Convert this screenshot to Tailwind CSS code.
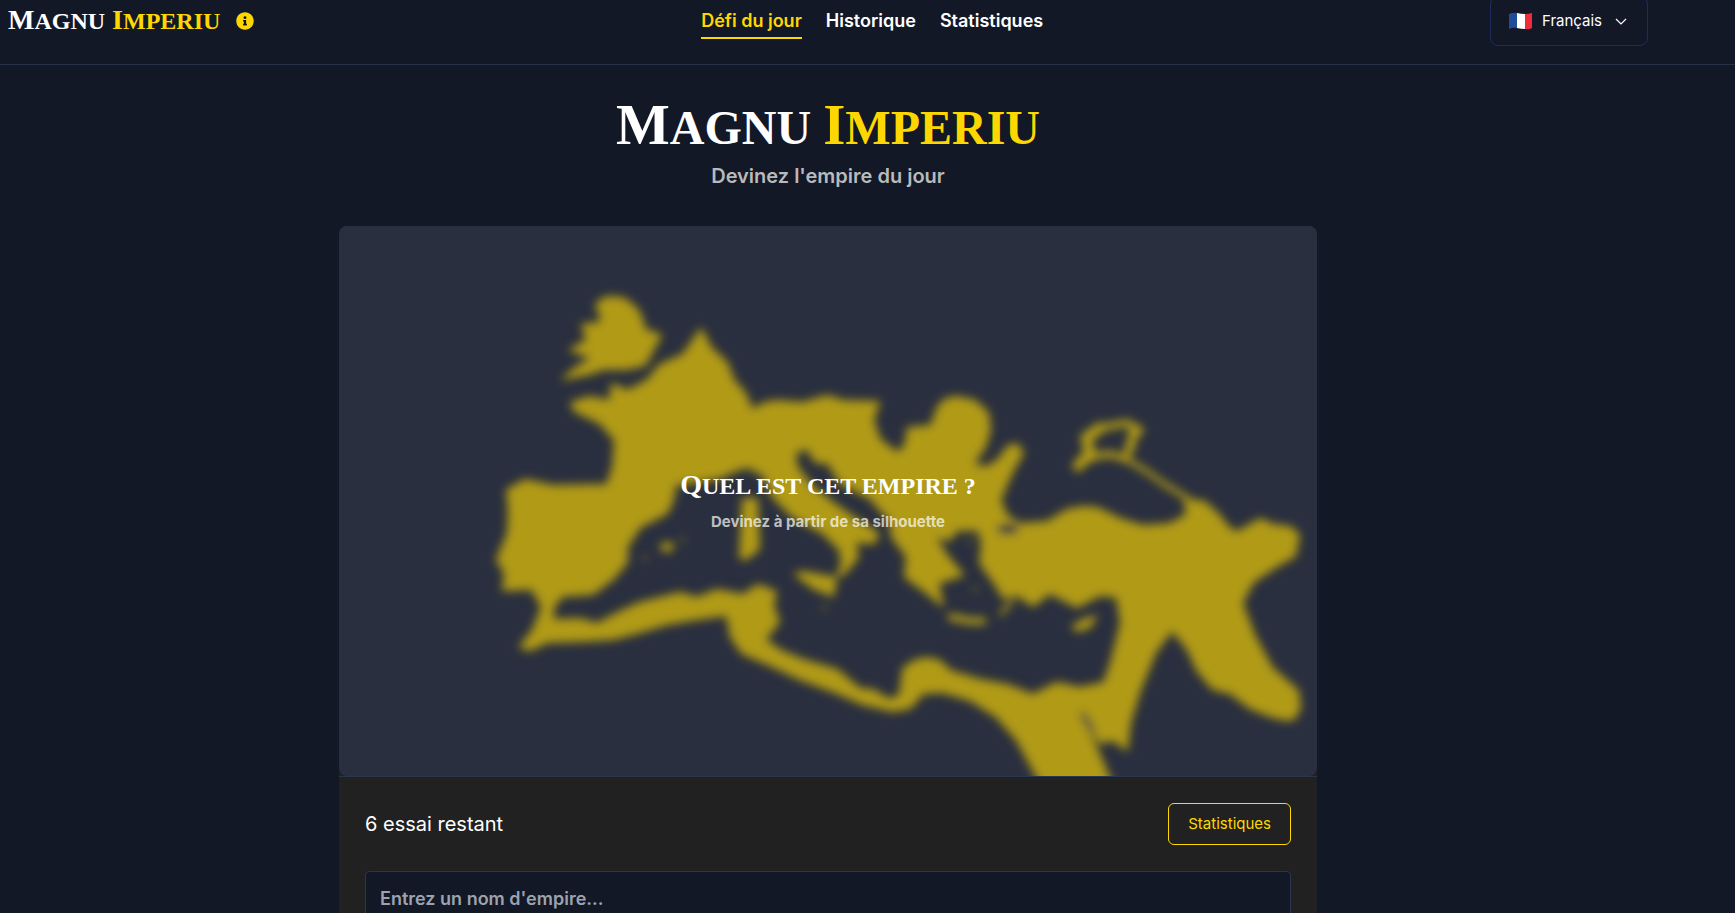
<!DOCTYPE html>
<html lang="fr">
<head>
  <meta charset="UTF-8" />
  <meta name="viewport" content="width=device-width, initial-scale=1.0" />
  <title>Magnu Imperiu</title>
  <script src="https://cdn.jsdelivr.net/npm/@tailwindcss/browser@4"></script>
</head>
<body class="bg-[#121826] font-['Inter',sans-serif] text-white overflow-x-hidden h-screen overflow-y-hidden">
  <header class="h-[88px] -mt-[23px] pl-2 pr-[87px] flex items-center justify-between border-b border-[#263147]">
    <div class="flex items-center gap-4">
      <a href="#" class="font-['Liberation_Serif',serif] font-bold uppercase text-[28px] leading-8 whitespace-nowrap">M<span class="text-2xl">agnu</span> <span class="text-[#ffd700]">I<span class="text-2xl">mperiu</span></span></a>
      <button type="button" aria-label="Informations">
        <svg class="block size-[18px]" viewBox="0 0 512 512" fill="#ffd700"><path d="M256 8C119 8 8 119 8 256s111 248 248 248 248-111 248-248S393 8 256 8zm0 110a42 42 0 1 1 0 84 42 42 0 0 1 0-84zm56 254c0 7-5 12-12 12h-88c-7 0-12-5-12-12v-24c0-7 5-12 12-12h12v-64h-12c-7 0-12-5-12-12v-24c0-7 5-12 12-12h64c7 0 12 5 12 12v100h12c7 0 12 5 12 12v24z"/></svg>
      </button>
    </div>

    <nav class="flex items-center gap-6 text-lg leading-6 font-semibold">
      <a href="#" class="relative text-[#ffd700]">Défi du jour<span class="absolute inset-x-0 -bottom-[6px] h-[2px] bg-[#ffd700]"></span></a>
      <a href="#">Historique</a>
      <a href="#">Statistiques</a>
    </nav>

    <label class="h-[50px] px-[18px] flex items-center rounded-lg border border-[#1e2c5f]">
      <svg class="w-6 h-[18px] mr-[9px]" viewBox="0 0 24 18">
        <path fill="#1f4b99" d="M0 2Q4 0 8 1V16Q4 15 0 17Z"/>
        <path fill="#fff" d="M8 1Q12 2 16 2V17Q12 17 8 16Z"/>
        <path fill="#ed2d39" d="M16 2Q20 2 23 1V16Q20 18 16 17Z"/>
      </svg>
      <select aria-label="Langue" class="appearance-none bg-transparent text-[15px] leading-6 outline-none">
        <option>Français</option>
      </select>
      <svg class="size-4 ml-[10px]" viewBox="0 0 16 16" fill="none" stroke="#fff" stroke-width="1.2"><path d="M3 6L8 11 13 6"/></svg>
    </label>
  </header>

  <main class="pr-[79px]">
    <div class="max-w-[978px] mx-auto">
      <div class="pt-7 pb-9 text-center">
        <h1 class="font-['Liberation_Serif',serif] font-bold uppercase text-[57px] leading-[64px]">M<span class="text-5xl">agnu </span><span class="text-[#ffd700]">I<span class="text-5xl">mperiu</span></span></h1>
        <p class="mt-[5px] text-xl leading-7 font-semibold text-[#b8babd]">Devinez l'empire du jour</p>
      </div>

      <section class="bg-[#212121] rounded-lg">
        <div class="relative rounded-lg overflow-hidden bg-[#2a2f3f]">
          <svg class="block w-full" viewBox="339 226 978 550">
            <defs>
              <filter id="haze" x="-5%" y="-5%" width="110%" height="110%"><feGaussianBlur stdDeviation="5"/></filter>
            </defs>
            <g filter="url(#haze)" fill="#b09a12" stroke="#b09a12" stroke-width="2" stroke-linejoin="round" stroke-linecap="round">
              <!-- Britannia -->
              <path d="M596 305L604 298 613 297 625 299 637 309 642 319 645 330 661 335 653 350 645 365 627 369 603 369 589 374 563 379 577 367 592 358 570 350 587 340 582 325 598 323 602 319Z"/>
              <!-- continent, the sea cut out of it -->
              <path fill-rule="evenodd" d="M571 403L590 397 610 401 612 384 627 391 647 381 660 365 683 355 701 329 711 348 727 363 734 381 745 393 752 410 765 403 777 401 803 403 827 396 843 401 879 402 873 420 880 440 898 453 905 446 908 428 931 426 938 407 946 399 957 397 975 401 988 413 990 430 985 447 973 465 988 467 1000 458 1007 447 1017 444 1023 453 1014 468 1006 486 1000 500 1007 516 1020 524 1047 522 1067 510 1083 507 1097 508 1120 519 1143 526 1170 524 1187 515 1185 502 1203 501 1218 514 1230 529 1238 532 1248 526 1260 519 1273 525 1290 527 1299 535 1295 556 1277 566 1253 582 1242 603 1255 637 1272 668 1298 691 1300 708 1294 719 1287 720 1273 717 1250 708 1230 693 1213 689 1197 670 1188 650 1172 630 1155 653 1140 690 1130 723 1127 750 1113 740 1100 743 1080 712 1096 747 1108 775 1118 800 1048 800 1037 777 1017 740 997 717 970 700 943 692 923 693 910 708 893 711 863 704 835 692 800 679 770 665 742 653 731 637 727 615 697 619 667 624 640 632 613 639 580 641 547 642 530 650 520 647 533 630 542 607 532 589 503 590 505 573 497 560 508 533 509 510 507 490 525 480 553 486 607 485 613 467 615 440 600 423 575 411Z
                M553 608L562 596 593 594 613 579 627 562 627 547 640 527 667 513 673 500 675 485 697 482 720 478 737 470 748 467 763 475 773 497 793 517 823 533 840 550 842 565 837 575 843 575 858 557 855 542 875 543 878 533 853 517 833 503 813 487 797 467 795 453 807 448 815 462 828 463 840 483 870 498 883 513 890 520 892 537 907 557 905 577 923 590 943 606 938 583 963 575 948 557 935 537 950 540 957 530 978 530 982 543 980 563 997 587 1003 598 1017 595 1033 606 1050 593 1077 607 1100 595 1117 597 1121 623 1111 663 1104 683 1080 688 1057 683 1033 695 1007 685 980 680 950 671 940 661 927 658 914 661 903 669 900 695 890 700 873 690 860 689 837 670 803 660 783 652 765 640 779 622 773 605 776 592 758 585 743 595 717 590 697 598 680 593 640 603 620 612 597 624 580 619 553 620Z"/>
              <!-- islands -->
              <path d="M743 499L757 499 759 549 745 560 740 557Z"/>
              <path d="M795 574L803 572 836 578 833 596 813 588Z"/>
              <path d="M1072 627L1083 620 1096 616 1090 627 1078 631Z"/>
              <ellipse cx="667" cy="547" rx="6" ry="4"/>
              <g stroke="none" opacity=".4">
                <circle cx="645" cy="558" r="3"/>
                <circle cx="682" cy="540" r="3"/>
                <circle cx="825" cy="608" r="3"/>
                <circle cx="975" cy="589" r="3"/>
                <circle cx="970" cy="541" r="3"/>
              </g>
              <g fill="none">
                <path stroke-width="7" d="M951 617L970 621 983 621"/>
                <path stroke-width="4" d="M1012 601L1001 614"/>
                <!-- Bosporan coast -->
                <path stroke-width="11" d="M1078 466L1090 453 1086 438 1100 428"/>
                <path stroke-width="7" d="M1078 464L1096 456 1110 454 1126 459 1130 442 1140 430 1127 423 1100 428M1132 432L1132 448"/>
                <path stroke-width="5" d="M1126 459L1146 471 1164 484 1190 500"/>
                <path stroke-width="14" d="M1015 455L1006 470"/>
              </g>
              <ellipse cx="1008" cy="529" rx="10" ry="4" fill="#2a2f3f" stroke="#2a2f3f"/>
              <path d="M1083 715L1092 730" fill="none" stroke="#2a2f3f" stroke-width="5"/>
            </g>
          </svg>
          <div class="absolute inset-0 flex flex-col items-center justify-center text-center">
            <h2 class="font-['Liberation_Serif',serif] font-bold uppercase text-[28px] leading-8">Q<span class="text-2xl">uel est cet empire ?</span></h2>
            <p class="mt-2 text-[15px] leading-6 font-bold text-white/70">Devinez à partir de sa silhouette</p>
          </div>
        </div>

        <div class="px-[26px] pt-[26px] pb-10 border-t border-[#2a3550]">
          <div class="flex items-center justify-between mb-[26px]">
            <p class="text-xl leading-7">6 essai restant</p>
            <button type="button" class="h-[42px] px-[19px] rounded-md border border-[#ffd700] text-[#ffd700] text-[15px] leading-6">Statistiques</button>
          </div>
          <input type="text" aria-label="Nom d'empire" placeholder="Entrez un nom d'empire..." class="block w-full h-[54px] px-[14px] rounded border border-[#2a3550] bg-[#121826] text-lg font-semibold text-white placeholder:text-[#9ca3af] outline-none" />
        </div>
      </section>
    </div>
  </main>
</body>
</html>
